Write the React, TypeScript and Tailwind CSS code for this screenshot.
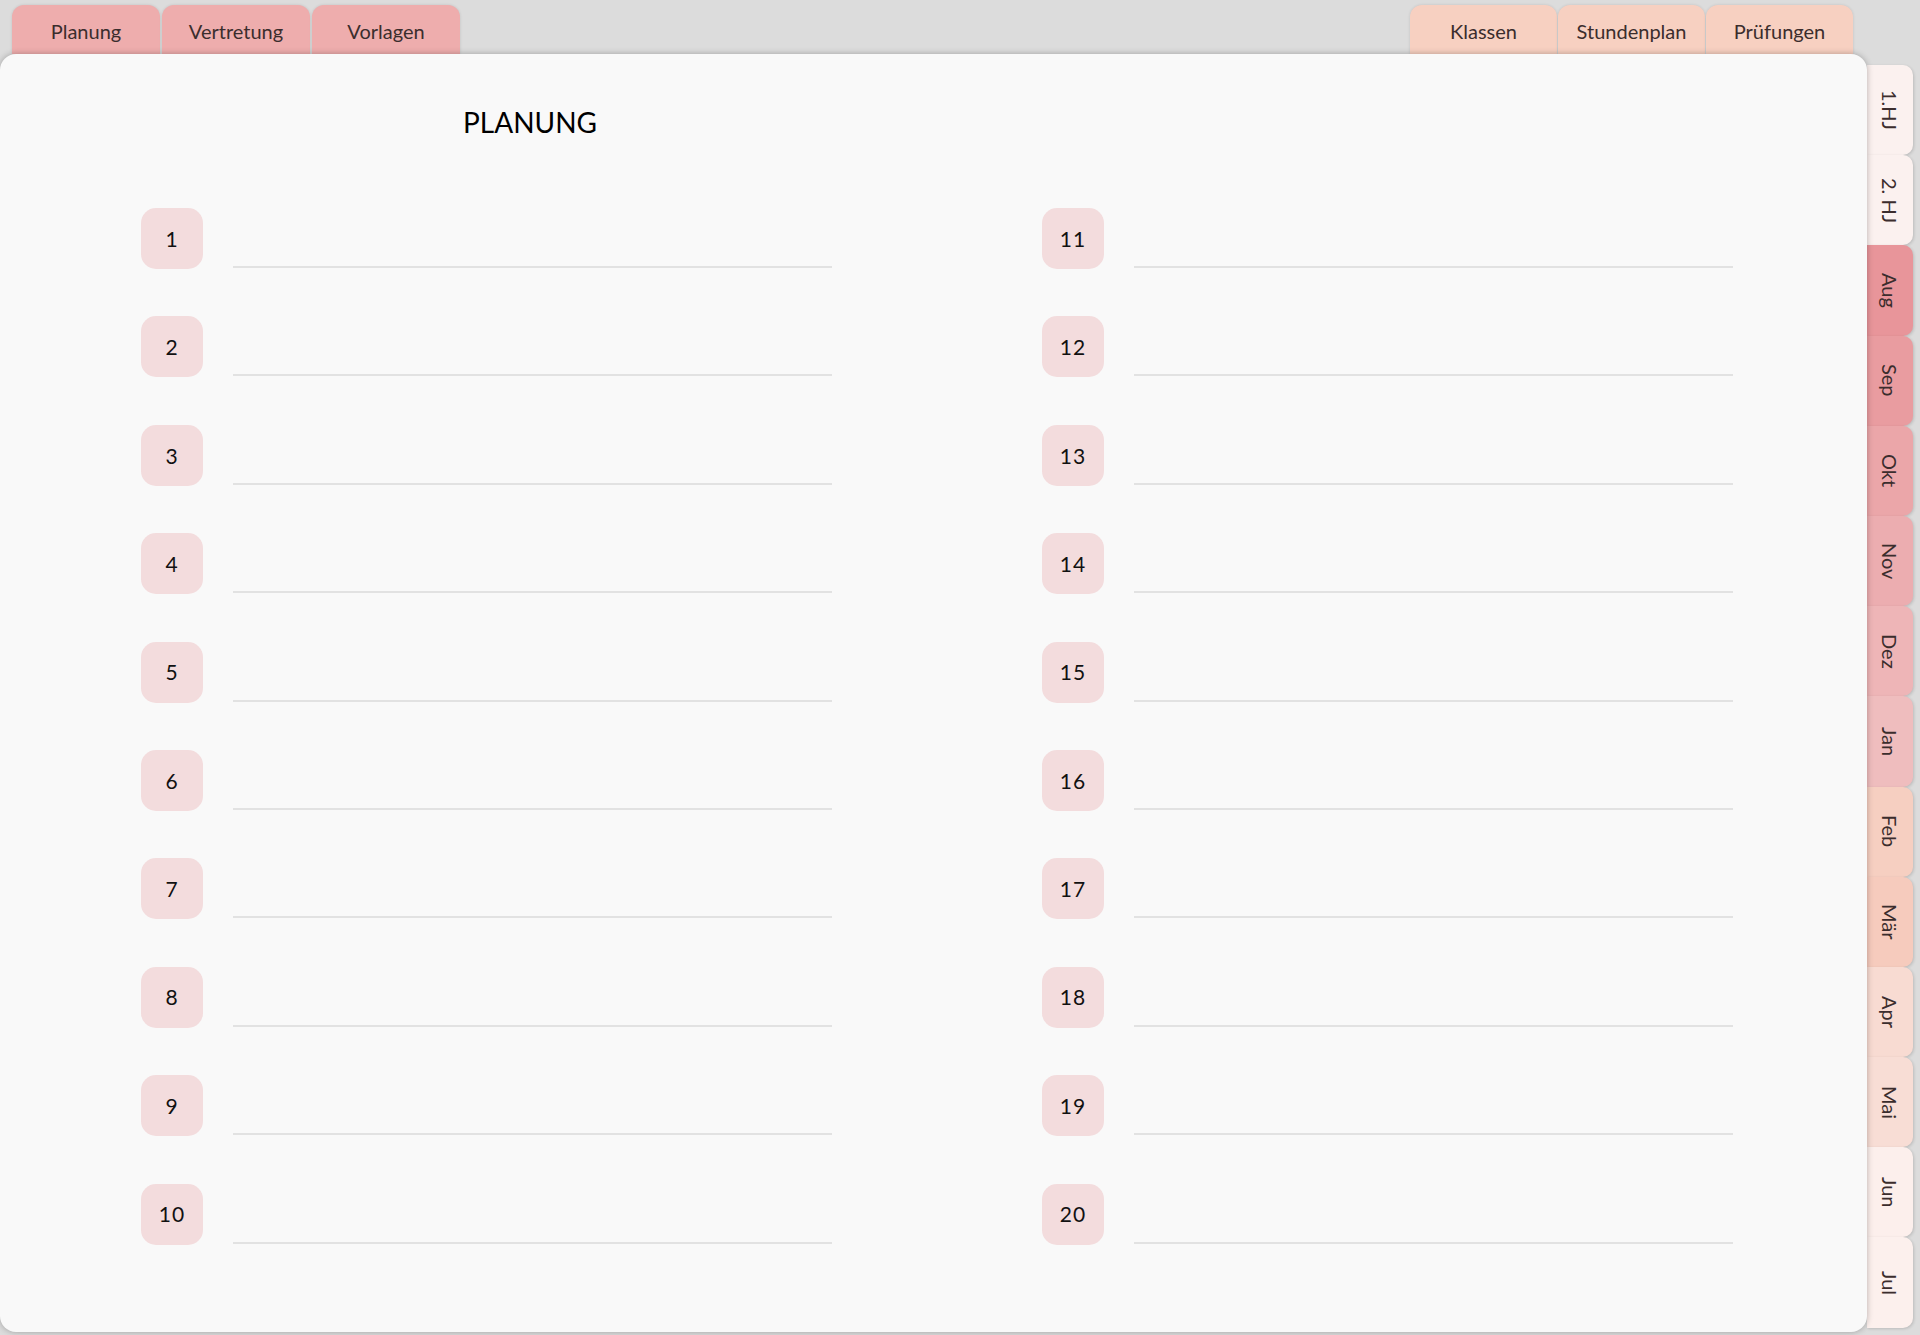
import React from "react";

const leftTabs = ["Planung", "Vertretung", "Vorlagen"];
const rightTabs = ["Klassen", "Stundenplan", "Prüfungen"];

const sideTabs = [
  { label: "1.HJ", color: "bg-[#fbf1ef]" },
  { label: "2. HJ", color: "bg-[#fbf1ef]" },
  { label: "Aug", color: "bg-[#e8959a]" },
  { label: "Sep", color: "bg-[#e99ca0]" },
  { label: "Okt", color: "bg-[#eba6a9]" },
  { label: "Nov", color: "bg-[#ecadb0]" },
  { label: "Dez", color: "bg-[#eeb5b7]" },
  { label: "Jan", color: "bg-[#efbdbe]" },
  { label: "Feb", color: "bg-[#f6cfc1]" },
  { label: "Mär", color: "bg-[#f6cbbd]" },
  { label: "Apr", color: "bg-[#f8dbd2]" },
  { label: "Mai", color: "bg-[#f8ddd5]" },
  { label: "Jun", color: "bg-[#fcefec]" },
  { label: "Jul", color: "bg-[#fcf0ed]" },
];

const EntryRow: React.FC<{ n: number }> = ({ n }) => (
  <div className="flex items-end h-[61px]">
    <div className="w-[62px] h-[61px] rounded-[15px] bg-[#f3dcdd] flex items-center justify-center text-[21px] tracking-wider text-[#111]">
      {n}
    </div>
    <div className="ml-[30px] w-[599px] mb-[1px] border-b-2 border-[#e2e2e2]" />
  </div>
);

const App: React.FC = () => {
  const left = Array.from({ length: 10 }, (_, i) => i + 1);
  const right = Array.from({ length: 10 }, (_, i) => i + 11);

  return (
    <div
      className="w-[1920px] h-[1335px] bg-[#dcdcdc] overflow-hidden flex flex-col"
      style={{ fontFamily: "Lato, 'Open Sans', sans-serif" }}
    >
      {/* Top tabs */}
      <div className="h-[54px] flex items-end justify-between pl-[12px] pr-[67px]">
        <div className="flex gap-[2px]">
          {leftTabs.map((t) => (
            <div
              key={t}
              className="w-[148px] h-[49px] rounded-t-[12px] bg-[#eeadad] text-center pt-[14px] leading-[24px] text-[20px] text-[#3b2d2d] shadow-[0_0_3px_rgba(0,0,0,0.12)]"
            >
              {t}
            </div>
          ))}
        </div>
        <div className="flex gap-[1px]">
          {rightTabs.map((t) => (
            <div
              key={t}
              className="w-[147px] h-[49px] rounded-t-[12px] bg-[#f7d0c1] text-center pt-[14px] leading-[24px] text-[20px] text-[#3b2d2d] shadow-[0_0_3px_rgba(0,0,0,0.12)]"
            >
              {t}
            </div>
          ))}
        </div>
      </div>

      <div className="flex">
        {/* Page */}
        <div className="relative z-10 w-[1867px] h-[1278px] bg-[#f9f9f9] rounded-[16px] shadow-[0_0_6px_rgba(0,0,0,0.28)] pt-[51px]">
          <h1 className="w-[1060px] text-center text-[28px] leading-[34px] text-black">
            PLANUNG
          </h1>
          <div className="mt-[69px] pl-[141px] grid grid-cols-[691px_691px] gap-x-[210px]">
            <div className="flex flex-col gap-y-[47.4px]">
              {left.map((n) => (
                <EntryRow key={n} n={n} />
              ))}
            </div>
            <div className="flex flex-col gap-y-[47.4px]">
              {right.map((n) => (
                <EntryRow key={n} n={n} />
              ))}
            </div>
          </div>
        </div>

        {/* Side tabs */}
        <div className="pt-[11px] flex flex-col">
          {sideTabs.map((t) => (
            <div
              key={t.label}
              className={`${t.color} w-[46px] h-[90.2px] rounded-r-[10px] flex items-center justify-center shadow-[1px_1px_3px_rgba(0,0,0,0.15)]`}
            >
              <span className="[writing-mode:vertical-rl] text-[20px] text-[#3b2d2d] leading-none">
                {t.label}
              </span>
            </div>
          ))}
        </div>
      </div>
    </div>
  );
};

export default App;
